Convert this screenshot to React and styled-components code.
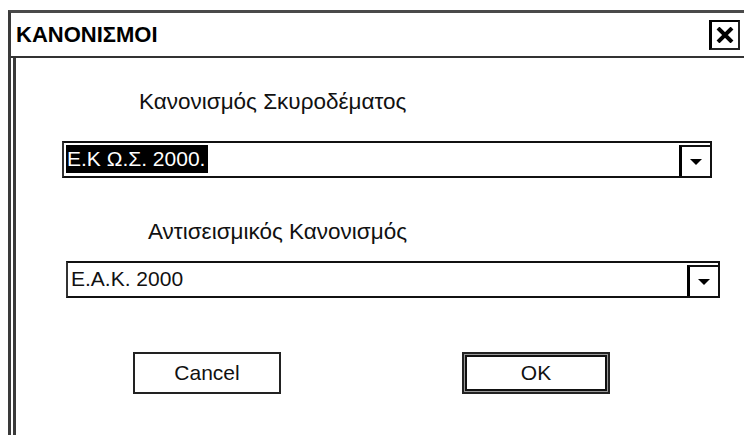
import React from "react";
import styled, { createGlobalStyle } from "styled-components";

const GlobalStyle = createGlobalStyle`
  html, body {
    margin: 0;
    padding: 0;
    background: #fff;
    overflow: hidden;
  }
  body {
    font-family: "Liberation Sans", Arial, sans-serif;
    color: #111;
  }
`;

const Window = styled.div`
  margin: 10px 0 0 8px;
  width: 740px;
  height: 440px;
  border-top: 3px solid #4a4a4a;
  border-left: 3px solid #3a3a3a;
  box-sizing: border-box;
  display: flex;
  flex-direction: column;
`;

const TitleBar = styled.div`
  height: 45px;
  box-sizing: border-box;
  display: flex;
  align-items: center;
  padding: 0 8px 0 5px;
  border-bottom: 2px solid #333;
`;

const Title = styled.div`
  flex: 1;
  font-size: 22px;
  font-weight: bold;
  color: #000;
`;

const CloseBox = styled.div`
  width: 31px;
  height: 30px;
  box-sizing: border-box;
  border-top: 2px solid #000;
  border-left: 3px solid #000;
  border-right: 2px solid #222;
  border-bottom: 2px solid #222;
  display: flex;
  align-items: center;
  justify-content: center;
`;

const Body = styled.div`
  flex: 1;
  margin-left: 2px;
  border-left: 3px solid #3a3a3a;
  display: flex;
  flex-direction: column;
`;

const Label = styled.div`
  font-size: 22.5px;
  line-height: 26px;
  margin-top: ${(p) => p.$top}px;
  padding-left: ${(p) => p.$indent}px;
`;

const Combo = styled.div`
  display: flex;
  width: ${(p) => p.$width}px;
  height: 37px;
  box-sizing: border-box;
  margin-top: ${(p) => p.$top}px;
  margin-left: ${(p) => p.$indent}px;
  border-top: 2px solid #111;
  border-left: 2px solid #333;
  border-right: 2px solid #111;
  border-bottom: 2px solid #111;
`;

const Field = styled.div`
  flex: 1;
  padding: 2px 0 0 2px;
  font-size: 21px;
`;

const Value = styled.span`
  display: inline-block;
  line-height: 28px;
  padding: 0 3px 0 1px;
  background: ${(p) => (p.$selected ? "#000" : "transparent")};
  color: ${(p) => (p.$selected ? "#fff" : "#111")};
`;

const DropButton = styled.div`
  width: 31px;
  margin-top: 2px;
  box-sizing: border-box;
  border-top: 2px solid #111;
  border-left: 3px solid #000;
  display: flex;
  align-items: center;
  justify-content: center;
`;

const ButtonRow = styled.div`
  display: flex;
  margin-top: 54px;
  padding-left: 117px;
  gap: 181px;
`;

const Button = styled.div`
  width: 148px;
  height: 42px;
  box-sizing: border-box;
  display: flex;
  align-items: center;
  justify-content: center;
  font-size: 21px;
  color: #111;
  border: 2px solid #222;
  box-shadow: ${(p) =>
    p.$default ? "inset 0 0 0 1px #999, inset 0 0 0 3px #111" : "none"};
`;

const Arrow = () => (
  <svg width="14" height="8" viewBox="0 0 14 8">
    <polygon points="1,1 13,1 7,7" fill="#000" />
  </svg>
);

const CloseIcon = () => (
  <svg width="18" height="16" viewBox="0 0 18 16">
    <path d="M2 1 L16 15 M16 1 L2 15" stroke="#000" strokeWidth="4" />
  </svg>
);

const App = () => {
  return (
    <>
      <GlobalStyle />
      <Window>
        <TitleBar>
          <Title>ΚΑΝΟΝΙΣΜΟΙ</Title>
          <CloseBox>
            <CloseIcon />
          </CloseBox>
        </TitleBar>
        <Body>
          <Label $top={31} $indent={123}>Κανονισμός Σκυροδέματος</Label>
          <Combo $top={26} $indent={46} $width={650}>
            <Field>
              <Value $selected>Ε.Κ Ω.Σ. 2000.</Value>
            </Field>
            <DropButton>
              <Arrow />
            </DropButton>
          </Combo>
          <Label $top={41} $indent={132}>Αντισεισμικός Κανονισμός</Label>
          <Combo $top={16} $indent={50} $width={654}>
            <Field>
              <Value>Ε.Α.Κ. 2000</Value>
            </Field>
            <DropButton>
              <Arrow />
            </DropButton>
          </Combo>
          <ButtonRow>
            <Button>Cancel</Button>
            <Button $default>OK</Button>
          </ButtonRow>
        </Body>
      </Window>
    </>
  );
};

export default App;
